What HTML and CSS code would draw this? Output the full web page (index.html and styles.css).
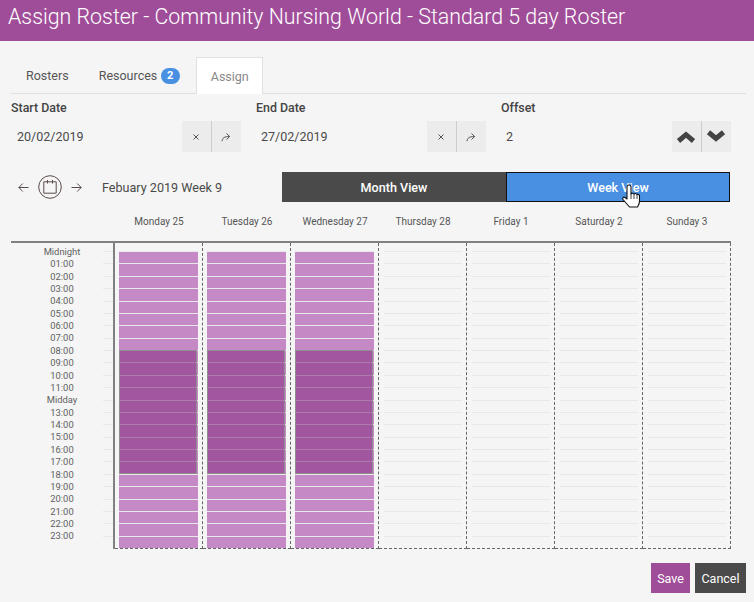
FILE: index.html
```html
<!DOCTYPE html>
<html lang="en">
<head>
<meta charset="utf-8">
<title>Assign Roster</title>
<link rel="stylesheet" href="styles.css">
</head>
<body>
<header class="title-bar">Assign Roster - Community Nursing World - Standard 5 day Roster</header>
<main class="main">
  <nav class="tabs">
    <a class="tab">Rosters</a>
    <a class="tab">Resources<span class="badge">2</span></a>
    <a class="tab tab-active">Assign</a>
  </nav>

  <section class="form-row">
    <div class="field">
      <div class="field-label">Start Date</div>
      <div class="field-body">
        <span class="field-value">20/02/2019</span>
        <span class="btn-group">
          <span class="icon-btn"><svg width="10" height="10" viewBox="0 0 10 10"><path class="thin" d="M2.5 2.5l5 5M7.5 2.5l-5 5"/></svg></span>
          <span class="icon-btn"><svg width="10" height="10" viewBox="0 0 10 10"><path class="thin" d="M1 9.200c.3-3 2-4.700 7.500-4.700M5.500 1.500l3.200 3-3.200 3"/></svg></span>
        </span>
      </div>
    </div>
    <div class="field">
      <div class="field-label">End Date</div>
      <div class="field-body">
        <span class="field-value">27/02/2019</span>
        <span class="btn-group">
          <span class="icon-btn"><svg width="10" height="10" viewBox="0 0 10 10"><path class="thin" d="M2.5 2.5l5 5M7.5 2.5l-5 5"/></svg></span>
          <span class="icon-btn"><svg width="10" height="10" viewBox="0 0 10 10"><path class="thin" d="M1 9.200c.3-3 2-4.700 7.500-4.700M5.500 1.500l3.200 3-3.200 3"/></svg></span>
        </span>
      </div>
    </div>
    <div class="field">
      <div class="field-label">Offset</div>
      <div class="field-body">
        <span class="field-value">2</span>
        <span class="btn-group">
          <span class="icon-btn"><svg width="20" height="14" viewBox="0 0 20 14"><path class="chev" d="M2.500 11L10 4.700 17.500 11"/></svg></span>
          <span class="icon-btn"><svg width="20" height="14" viewBox="0 0 20 14"><path class="chev" d="M2.500 2.300L10 8.500l7.500-6.200"/></svg></span>
        </span>
      </div>
    </div>
  </section>

  <section class="toolbar">
    <div class="date-nav">
      <svg class="nav-arrow" width="11" height="11" viewBox="0 0 11 11"><path class="line" d="M10.500 5.500H.8M4.800 1.500l-4 4 4 4"/></svg>
      <svg class="cal" width="24" height="24" viewBox="0 0 24 24"><circle class="line" cx="12" cy="12" r="11.300"/><path class="line" d="M5.800 6.800h12.400v11.400H5.800zM9.500 5v3.500M14.500 5v3.500"/></svg>
      <svg class="nav-arrow" width="11" height="11" viewBox="0 0 11 11"><path class="line" d="M.5 5.500h9.700M6.200 1.500l4 4-4 4"/></svg>
      <span class="period">Febuary 2019 Week 9</span>
    </div>
    <div class="switch">
      <button class="switch-btn">Month View</button>
      <button class="switch-btn switch-active">Week View</button>
      <svg class="cursor" width="20" height="24" viewBox="0 0 20 24"><path class="hand" d="M6 3a2 2 0 0 1 4 0v7a2 2 0 0 1 3 0a2 2 0 0 1 3 .5a2 2 0 0 1 2.500 1V17c0 3-1 4-2 6H8.500L2 15.500c-1-1.500.5-3 2-2L6 15z"/><path class="hand-line" d="M10 10v5M13 10v5M16 10.500V15"/></svg>
    </div>
  </section>

  <section class="calendar">
    <div class="day-heads">
      <div class="day-head">Monday 25</div>
      <div class="day-head">Tuesday 26</div>
      <div class="day-head">Wednesday 27</div>
      <div class="day-head">Thursday 28</div>
      <div class="day-head">Friday 1</div>
      <div class="day-head">Saturday 2</div>
      <div class="day-head">Sunday 3</div>
    </div>
    <div class="cal-body">
      <div class="axis">
        <div class="axis-row"><span class="axis-label">Midnight</span><i class="tick"></i></div>
        <div class="axis-row"><span class="axis-label">01:00</span><i class="tick"></i></div>
        <div class="axis-row"><span class="axis-label">02:00</span><i class="tick"></i></div>
        <div class="axis-row"><span class="axis-label">03:00</span><i class="tick"></i></div>
        <div class="axis-row"><span class="axis-label">04:00</span><i class="tick"></i></div>
        <div class="axis-row"><span class="axis-label">05:00</span><i class="tick"></i></div>
        <div class="axis-row"><span class="axis-label">06:00</span><i class="tick"></i></div>
        <div class="axis-row"><span class="axis-label">07:00</span><i class="tick"></i></div>
        <div class="axis-row"><span class="axis-label">08:00</span><i class="tick"></i></div>
        <div class="axis-row"><span class="axis-label">09:00</span><i class="tick"></i></div>
        <div class="axis-row"><span class="axis-label">10:00</span><i class="tick"></i></div>
        <div class="axis-row"><span class="axis-label">11:00</span><i class="tick"></i></div>
        <div class="axis-row"><span class="axis-label">Midday</span><i class="tick"></i></div>
        <div class="axis-row"><span class="axis-label">13:00</span><i class="tick"></i></div>
        <div class="axis-row"><span class="axis-label">14:00</span><i class="tick"></i></div>
        <div class="axis-row"><span class="axis-label">15:00</span><i class="tick"></i></div>
        <div class="axis-row"><span class="axis-label">16:00</span><i class="tick"></i></div>
        <div class="axis-row"><span class="axis-label">17:00</span><i class="tick"></i></div>
        <div class="axis-row"><span class="axis-label">18:00</span><i class="tick"></i></div>
        <div class="axis-row"><span class="axis-label">19:00</span><i class="tick"></i></div>
        <div class="axis-row"><span class="axis-label">20:00</span><i class="tick"></i></div>
        <div class="axis-row"><span class="axis-label">21:00</span><i class="tick"></i></div>
        <div class="axis-row"><span class="axis-label">22:00</span><i class="tick"></i></div>
        <div class="axis-row"><span class="axis-label">23:00</span><i class="tick"></i></div>
      </div>
      <div class="day day-filled">
        <div class="cell"></div><div class="cell"></div><div class="cell"></div><div class="cell"></div><div class="cell"></div><div class="cell"></div>
        <div class="cell"></div><div class="cell"></div><div class="cell"></div><div class="cell"></div><div class="cell"></div><div class="cell"></div>
        <div class="cell"></div><div class="cell"></div><div class="cell"></div><div class="cell"></div><div class="cell"></div><div class="cell"></div>
        <div class="cell"></div><div class="cell"></div><div class="cell"></div><div class="cell"></div><div class="cell"></div><div class="cell"></div>
        <div class="shift"></div>
      </div>
      <div class="day day-filled">
        <div class="cell"></div><div class="cell"></div><div class="cell"></div><div class="cell"></div><div class="cell"></div><div class="cell"></div>
        <div class="cell"></div><div class="cell"></div><div class="cell"></div><div class="cell"></div><div class="cell"></div><div class="cell"></div>
        <div class="cell"></div><div class="cell"></div><div class="cell"></div><div class="cell"></div><div class="cell"></div><div class="cell"></div>
        <div class="cell"></div><div class="cell"></div><div class="cell"></div><div class="cell"></div><div class="cell"></div><div class="cell"></div>
        <div class="shift"></div>
      </div>
      <div class="day day-filled">
        <div class="cell"></div><div class="cell"></div><div class="cell"></div><div class="cell"></div><div class="cell"></div><div class="cell"></div>
        <div class="cell"></div><div class="cell"></div><div class="cell"></div><div class="cell"></div><div class="cell"></div><div class="cell"></div>
        <div class="cell"></div><div class="cell"></div><div class="cell"></div><div class="cell"></div><div class="cell"></div><div class="cell"></div>
        <div class="cell"></div><div class="cell"></div><div class="cell"></div><div class="cell"></div><div class="cell"></div><div class="cell"></div>
        <div class="shift"></div>
      </div>
      <div class="day">
        <div class="cell"></div><div class="cell"></div><div class="cell"></div><div class="cell"></div><div class="cell"></div><div class="cell"></div>
        <div class="cell"></div><div class="cell"></div><div class="cell"></div><div class="cell"></div><div class="cell"></div><div class="cell"></div>
        <div class="cell"></div><div class="cell"></div><div class="cell"></div><div class="cell"></div><div class="cell"></div><div class="cell"></div>
        <div class="cell"></div><div class="cell"></div><div class="cell"></div><div class="cell"></div><div class="cell"></div><div class="cell"></div>
      </div>
      <div class="day">
        <div class="cell"></div><div class="cell"></div><div class="cell"></div><div class="cell"></div><div class="cell"></div><div class="cell"></div>
        <div class="cell"></div><div class="cell"></div><div class="cell"></div><div class="cell"></div><div class="cell"></div><div class="cell"></div>
        <div class="cell"></div><div class="cell"></div><div class="cell"></div><div class="cell"></div><div class="cell"></div><div class="cell"></div>
        <div class="cell"></div><div class="cell"></div><div class="cell"></div><div class="cell"></div><div class="cell"></div><div class="cell"></div>
      </div>
      <div class="day">
        <div class="cell"></div><div class="cell"></div><div class="cell"></div><div class="cell"></div><div class="cell"></div><div class="cell"></div>
        <div class="cell"></div><div class="cell"></div><div class="cell"></div><div class="cell"></div><div class="cell"></div><div class="cell"></div>
        <div class="cell"></div><div class="cell"></div><div class="cell"></div><div class="cell"></div><div class="cell"></div><div class="cell"></div>
        <div class="cell"></div><div class="cell"></div><div class="cell"></div><div class="cell"></div><div class="cell"></div><div class="cell"></div>
      </div>
      <div class="day">
        <div class="cell"></div><div class="cell"></div><div class="cell"></div><div class="cell"></div><div class="cell"></div><div class="cell"></div>
        <div class="cell"></div><div class="cell"></div><div class="cell"></div><div class="cell"></div><div class="cell"></div><div class="cell"></div>
        <div class="cell"></div><div class="cell"></div><div class="cell"></div><div class="cell"></div><div class="cell"></div><div class="cell"></div>
        <div class="cell"></div><div class="cell"></div><div class="cell"></div><div class="cell"></div><div class="cell"></div><div class="cell"></div>
      </div>
    </div>
  </section>

  <footer class="actions">
    <button class="action action-save">Save</button>
    <button class="action action-cancel">Cancel</button>
  </footer>
</main>
</body>
</html>
```

FILE: styles.css
```css
* { box-sizing: border-box; }
html, body { height: 100%; }
body {
  margin: 0;
  background: #f5f5f5;
  font-family: Roboto, "Liberation Sans", sans-serif;
  color: #4a4a4a;
  overflow: hidden;
}
.title-bar {
  height: 41px;
  background: #a04d99;
  color: #fff;
  font-weight: 300;
  font-size: 21.350px;
  line-height: 33px;
  padding-left: 8px;
  white-space: nowrap;
}
.main { padding: 16px 8px 0 11px; }

.tabs {
  display: flex;
  height: 37px;
  border-bottom: 1px solid #e0e0e0;
}
.tab {
  display: flex;
  align-items: center;
  padding: 0 15px;
  font-size: 12.500px;
  height: 37px;
  color: #555;
}
.tab-active {
  margin-left: 1px;
  background: #fff;
  border: 1px solid #e0e0e0;
  border-bottom: 0;
  padding: 0 13.500px 0 14px;
  color: #888;
}
.badge {
  display: inline-block;
  width: 19px;
  height: 16px;
  margin-left: 3.500px;
  border-radius: 8px;
  background: #4a90e2;
  color: #fff;
  font-size: 11px;
  font-weight: 700;
  line-height: 16px;
  text-align: center;
}

.form-row {
  display: grid;
  grid-template-columns: repeat(3, 230px);
  column-gap: 15px;
  margin-top: 7px;
}
.field-label {
  font-size: 12.400px;
  font-weight: 500;
  line-height: 14px;
  color: #444;
}
.field-body {
  display: flex;
  align-items: center;
  justify-content: space-between;
  height: 31px;
  margin-top: 6px;
  padding-left: 6px;
  font-size: 12.500px;
}
.field + .field .field-body { padding-left: 5px; }
.btn-group { display: flex; height: 31px; }
.icon-btn {
  display: flex;
  align-items: center;
  justify-content: center;
  width: 29.500px;
  height: 31px;
  background: #ececec;
}
.icon-btn:first-child { border-right: 1px solid #ccc; }
.thin { fill: none; stroke: #555; stroke-width: 1; }
.chev { fill: none; stroke: #444; stroke-width: 5; }

.toolbar {
  display: flex;
  align-items: center;
  height: 30px;
  margin-top: 20px;
  width: 719px;
}
.date-nav {
  display: flex;
  align-items: center;
  width: 271px;
  padding-left: 6.500px;
}
.nav-arrow { flex: none; }
.cal { flex: none; margin: 0 9px; }
.line { fill: none; stroke: #5a4c4c; stroke-width: 1; }
.period { margin-left: 20.500px; font-size: 12.600px; white-space: nowrap; }
.switch {
  position: relative;
  display: flex;
  flex: 1;
  height: 30px;
}
.switch-btn {
  flex: 1;
  border: 1px solid #4a4a4a;
  background: #4a4a4a;
  color: #fff;
  font: 500 12.600px Roboto, sans-serif;
  padding: 0;
}
.switch-active { background: #4a90e2; border-color: #111; }
.cursor { position: absolute; left: 339px; top: 12px; }
.hand { fill: #fff; stroke: #111; stroke-width: 1.100; stroke-linejoin: round; }
.hand-line { fill: none; stroke: #111; stroke-width: .8; }

.calendar { width: 720px; }
.day-heads {
  display: grid;
  grid-template-columns: repeat(7, 88px);
  height: 39px;
  margin-left: 104px;
  padding-top: 13px;
  font-size: 10px;
  line-height: 14px;
  text-align: center;
  color: #555;
}
.cal-body {
  display: flex;
  border-top: 2px solid #808080;
  height: 308px;
}
.axis {
  flex: none;
  width: 104px;
  padding-top: 8px;
  border-right: 2px solid #808080;
}
.axis-row { display: flex; height: 12.375px; }
.axis-label {
  flex: 1;
  padding-left: 10px;
  margin-top: -5.200px;
  height: 12px;
  font-size: 9.400px;
  line-height: 12px;
  text-align: center;
  color: #5f5f5f;
  white-space: nowrap;
}
.tick { width: 10px; height: 1px; background: #e8e8e8; }

.day {
  position: relative;
  flex: none;
  width: 88px;
  padding: 8px 4px 0 5px;
  border-right: 1px dashed #666;
  border-bottom: 1px dashed #666;
}
.day-filled { padding-left: 4px; }
.cell {
  height: 12.375px;
  border-top: 1px solid #e8e8e8;
}
.day-filled .cell { background: #c58ac5; }
.shift {
  position: absolute;
  left: 4px;
  top: 107px;
  width: 78px;
  height: 124px;
  background: rgba(140, 55, 135, .62);
  border: 1px solid #8f8f8f;
}

.actions {
  display: flex;
  justify-content: flex-end;
  gap: 5px;
  margin-top: 14px;
}
.action {
  height: 30px;
  border: 0;
  padding: 1px 0 0;
  color: #fff;
  font: 400 12.500px Roboto, sans-serif;
}
.action-save { width: 39px; background: #a04d99; }
.action-cancel { width: 51px; background: #4a4a4a; }
```
